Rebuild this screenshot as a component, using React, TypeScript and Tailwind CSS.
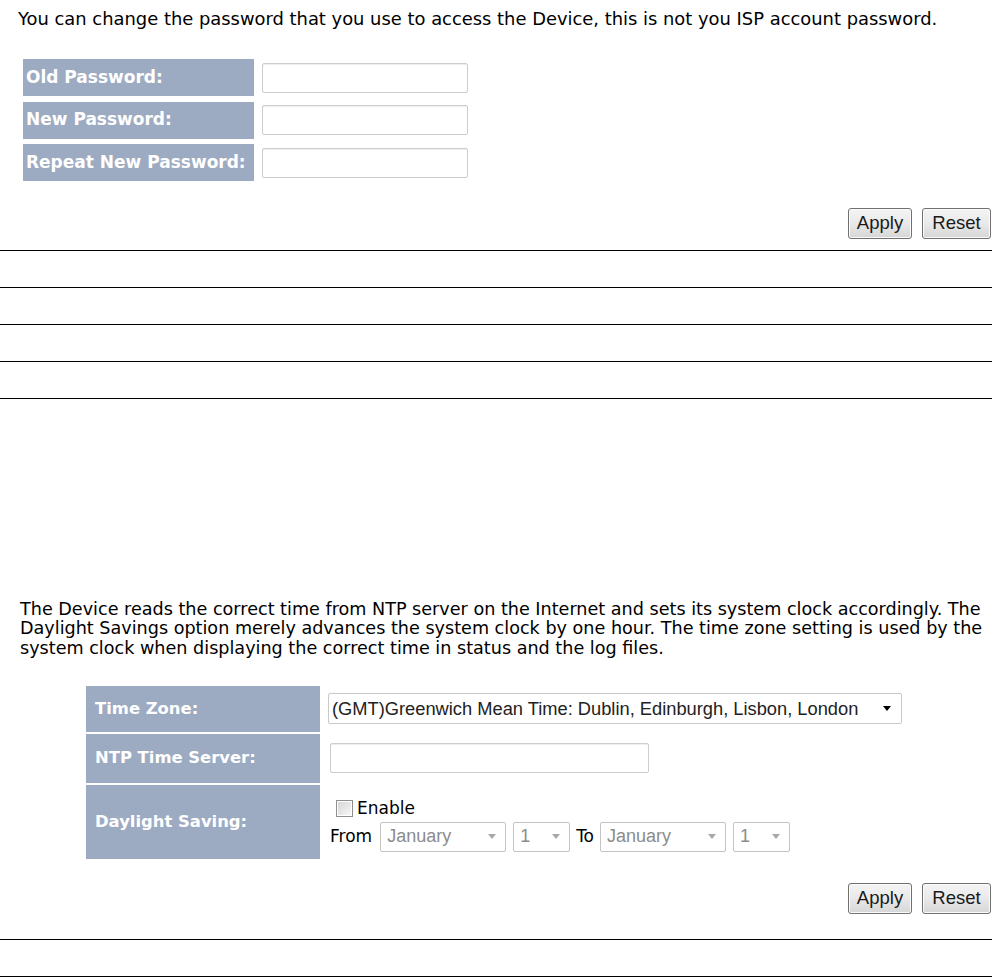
import type { ReactElement } from "react";

const VERDANA = "font-['DejaVu_Sans','Verdana',sans-serif]";
const ARIAL = "font-['Liberation_Sans','Arial',sans-serif]";

function Rule(): ReactElement {
    return <div className="h-[37px] border-t border-black" />;
}

function FormButtons(): ReactElement {
    return (
        <div className="flex justify-end gap-[10px] pr-px">
            <button
                type="button"
                className={`${ARIAL} h-[31px] w-[64px] rounded-[3px] border border-[#707070] bg-gradient-to-b from-[#f4f4f4] via-[#e9e9e9] to-[#d6d6d6] text-[18.5px] leading-none text-[#1a1a1a] shadow-[inset_0_0_0_1px_#fbfbfb]`}
            >
                Apply
            </button>
            <button
                type="button"
                className={`${ARIAL} h-[31px] w-[69px] rounded-[3px] border border-[#707070] bg-gradient-to-b from-[#f4f4f4] via-[#e9e9e9] to-[#d6d6d6] text-[18.5px] leading-none text-[#1a1a1a] shadow-[inset_0_0_0_1px_#fbfbfb]`}
            >
                Reset
            </button>
        </div>
    );
}

function SelectArrow({ muted }: { muted?: boolean }): ReactElement {
    return (
        <span
            className={`h-0 w-0 border-x-[4px] border-t-[5px] border-x-transparent ${
                muted ? "border-t-[#a8a8a8]" : "border-t-black"
            }`}
        />
    );
}

function DisabledSelect({
    value,
    width,
}: {
    value: string;
    width: string;
}): ReactElement {
    return (
        <div
            className={`${ARIAL} ${width} flex h-[30px] items-center justify-between rounded-[2px] border border-[#c4c4c4] bg-white pl-[6px] pr-[9px] text-[18px] text-[#8c8c8c]`}
        >
            <span>{value}</span>
            <SelectArrow muted />
        </div>
    );
}

const passwordRows = ["Old Password:", "New Password:", "Repeat New Password:"];

export default function App(): ReactElement {
    return (
        <div className={`${VERDANA} min-h-[977px] w-[999px] bg-white text-[17px] text-black`}>
            <div className="w-[992px]">
                {/* password section */}
                <p className="pl-[18px] pt-[9px] text-[17.9px] leading-[19px]">
                    You can change the password that you use to access the
                    Device, this is not you ISP account password.
                </p>
                <div className="mt-[31px] grid grid-cols-[231px_206px] gap-x-[8px] gap-y-[5.5px] pl-[23px]">
                    {passwordRows.map((label) => (
                        <div key={label} className="contents">
                            <div className="flex h-[37px] items-center bg-[#9dabc2] pl-[3px] font-bold text-white">
                                {label}
                            </div>
                            <div className="flex items-center">
                                <div className="h-[30px] w-[206px] rounded-[2px] border border-[#cdcdcd] bg-white shadow-[inset_0_1px_1px_#eeeeee]" />
                            </div>
                        </div>
                    ))}
                </div>
                <div className="mt-[27px]">
                    <FormButtons />
                </div>
                <div className="mt-[11px]">
                    <Rule />
                    <Rule />
                    <Rule />
                    <Rule />
                    <div className="border-t border-black" />
                </div>

                {/* time section */}
                <p className="mt-[201px] pl-[20px] text-[17.6px] leading-[19.3px]">
                    The Device reads the correct time from NTP server on the
                    Internet and sets its system clock accordingly. The
                    <br />
                    Daylight Savings option merely advances the system clock by
                    one hour. The time zone setting is used by the
                    <br />
                    system clock when displaying the correct time in status and
                    the log files.
                </p>
                <div className="mt-[28px] grid grid-cols-[234px_auto] gap-x-[8px] gap-y-[2px] pl-[86px]">
                    <div className="flex h-[46px] items-center bg-[#9dabc2] pl-[9px] text-[16.4px] font-bold text-white">
                        Time Zone:
                    </div>
                    <div className="flex items-center">
                        <div
                            className={`${ARIAL} flex h-[31px] w-[574px] items-center justify-between rounded-[2px] border border-[#c9c9c9] bg-white pl-[3px] pr-[10px] text-[18.3px] text-[#222]`}
                        >
                            <span>
                                (GMT)Greenwich Mean Time: Dublin, Edinburgh,
                                Lisbon, London
                            </span>
                            <SelectArrow />
                        </div>
                    </div>

                    <div className="flex h-[49px] items-center bg-[#9dabc2] pl-[9px] text-[16.4px] font-bold text-white">
                        NTP Time Server:
                    </div>
                    <div className="flex items-center pl-[2px]">
                        <div className="h-[30px] w-[319px] rounded-[2px] border border-[#cdcdcd] bg-white shadow-[inset_0_1px_1px_#eeeeee]" />
                    </div>

                    <div className="flex h-[74px] items-center bg-[#9dabc2] pl-[9px] text-[16.4px] font-bold text-white">
                        Daylight Saving:
                    </div>
                    <div className="flex flex-col pt-[12px] pl-[2px]">
                        <label className="flex h-[23px] items-center gap-[4px] pl-[6px]">
                            <span className="flex h-[17px] w-[17px] items-center justify-center border border-[#8e8f8f] bg-white">
                                <span className="h-[13px] w-[13px] bg-gradient-to-br from-[#d6d6d6] to-[#f7f7f7]" />
                            </span>
                            <span className="leading-none">Enable</span>
                        </label>
                        <div className="mt-[2px] flex items-center">
                            <span className="mr-[8px] leading-none">From</span>
                            <DisabledSelect value="January" width="w-[126px]" />
                            <span className="ml-[7px]" />
                            <DisabledSelect value="1" width="w-[57px]" />
                            <span className="ml-[6px] mr-[6px] leading-none">To</span>
                            <DisabledSelect value="January" width="w-[126px]" />
                            <span className="ml-[7px]" />
                            <DisabledSelect value="1" width="w-[57px]" />
                        </div>
                    </div>
                </div>
                <div className="mt-[24px]">
                    <FormButtons />
                </div>
                <div className="mt-[25px]">
                    <Rule />
                    <div className="border-t border-black" />
                </div>
            </div>
        </div>
    );
}
